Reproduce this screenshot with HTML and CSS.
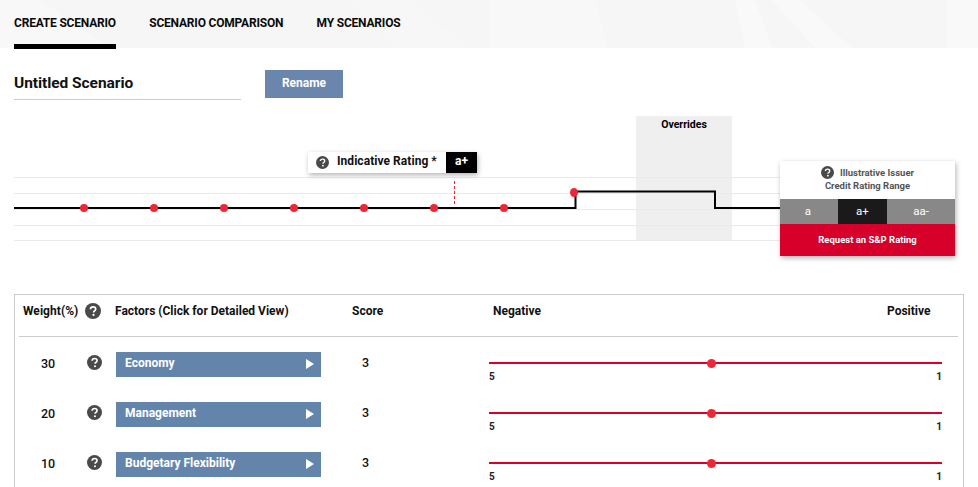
FILE: index.html
```html
<!DOCTYPE html>
<html lang="en">
<head>
<meta charset="utf-8">
<title>Create Scenario</title>
<link rel="stylesheet" href="styles.css">
</head>
<body>
<svg width="0" height="0" class="defs">
  <symbol id="q" viewBox="0 0 16 16">
    <circle cx="8" cy="8" r="8" fill="#4a4a4a"/>
    <path d="M5.400 6.200C5.500 4.600 6.600 3.800 8.100 3.800c1.500 0 2.600.9 2.600 2.200 0 1-.6 1.500-1.300 2-.6.4-.8.7-.8 1.400" fill="none" stroke="#fff" stroke-width="1.700"/>
    <circle cx="8.500" cy="11.900" r="1.100" fill="#fff"/>
  </symbol>
</svg>
<header class="top">
  <svg class="top-bg" width="978" height="48" viewBox="0 0 978 48">
    <polygon points="0,0 40,0 110,48 0,48" fill="#f8f8f8"/>
    <polygon points="345,0 410,0 470,48 395,48" fill="#f7f7f7"/>
    <polygon points="489,0 595,0 608,48 489,48" fill="#f8f8f8"/>
    <polygon points="735,0 755,0 772,48 745,48" fill="#f9f9f9"/>
    <polygon points="772,0 800,0 852,48 815,48" fill="#f9f9f9"/>
    <polygon points="947,0 978,0 978,48 947,48" fill="#f9f9f9"/>
  </svg>
  <nav class="tabs">
    <a class="tab active">CREATE SCENARIO</a>
    <a class="tab">SCENARIO COMPARISON</a>
    <a class="tab">MY SCENARIOS</a>
  </nav>
</header>
<section class="title-row">
  <h1 class="title">Untitled Scenario</h1>
  <button class="rename">Rename</button>
</section>
<section class="chart">
  <div class="overrides">Overrides</div>
  <svg class="chart-svg" width="978" height="145" viewBox="0 116 978 145">
    <g stroke="#ebebeb" stroke-width="1">
      <path d="M14 177.500H780M14 193.500H780M14 209.500H780M14 225.500H780M14 240.500H780"/>
    </g>
    <path d="M454.500 181V205" stroke="#e8263a" stroke-width="1" stroke-dasharray="3 2"/>
    <path d="M14 208H575.500V191.500H715V208H780" fill="none" stroke="#000" stroke-width="2"/>
    <g fill="#ee2737">
      <circle cx="84" cy="208" r="4"/><circle cx="154" cy="208" r="4"/><circle cx="224" cy="208" r="4"/>
      <circle cx="294" cy="208" r="4"/><circle cx="364" cy="208" r="4"/><circle cx="434" cy="208" r="4"/>
      <circle cx="504" cy="208" r="4"/><ellipse cx="574" cy="192.500" rx="4" ry="4.500"/>
    </g>
  </svg>
  <div class="indicative">
    <svg class="q-sm"><use href="#q"/></svg>
    <span class="ind-label">Indicative Rating *</span>
    <span class="ind-value">a+</span>
  </div>
  <aside class="issuer">
    <div class="issuer-head">
      <div class="issuer-line"><svg class="q-sm"><use href="#q"/></svg><span>Illustrative Issuer</span></div>
      <div>Credit Rating Range</div>
    </div>
    <div class="range">
      <span class="r-a">a</span><span class="r-b">a+</span><span class="r-c">aa-</span>
    </div>
    <div class="request">Request an S&amp;P Rating</div>
  </aside>
</section>
<section class="table">
  <div class="thead">
    <span>Weight(%)</span>
    <svg class="q-th"><use href="#q"/></svg>
    <span>Factors (Click for Detailed View)</span>
    <span class="th-score">Score</span>
    <span class="th-neg">Negative</span>
    <span class="th-pos">Positive</span>
  </div>
  <div class="row">
    <span class="weight">30</span>
    <svg class="q-row"><use href="#q"/></svg>
    <a class="factor">Economy<i class="arrow"></i></a>
    <span class="score">3</span>
    <div class="slider"><div class="track"><i class="knob"></i></div><div class="ends"><span>5</span><span>1</span></div></div>
  </div>
  <div class="row">
    <span class="weight">20</span>
    <svg class="q-row"><use href="#q"/></svg>
    <a class="factor">Management<i class="arrow"></i></a>
    <span class="score">3</span>
    <div class="slider"><div class="track"><i class="knob"></i></div><div class="ends"><span>5</span><span>1</span></div></div>
  </div>
  <div class="row">
    <span class="weight">10</span>
    <svg class="q-row"><use href="#q"/></svg>
    <a class="factor">Budgetary Flexibility<i class="arrow"></i></a>
    <span class="score">3</span>
    <div class="slider"><div class="track"><i class="knob"></i></div><div class="ends"><span>5</span><span>1</span></div></div>
  </div>
</section>
</body>
</html>
```
FILE: styles.css
```css
* { box-sizing: border-box; }
html, body { margin: 0; height: 487px; overflow: hidden; background: #fff; }
body { font-family: "Roboto", "Liberation Sans", sans-serif; color: #000; width: 978px; }
.defs { position: absolute; }

.top { position: relative; height: 48px; background: #f6f6f6; }
.top-bg { position: absolute; left: 0; top: 0; }
.tabs { position: relative; display: flex; gap: 33.300px; padding-left: 14px; }
.tab { height: 49px; padding-top: 16px; font-size: 12px; letter-spacing: -0.2px; line-height: 15px; font-weight: 700; color: #0a0a0a; white-space: nowrap; }
.tab.active { border-bottom: 5px solid #000; }

.title-row { display: flex; align-items: flex-start; padding: 22px 0 0 14px; height: 68px; }
.title { margin: 0; width: 227px; height: 30px; border-bottom: 1px solid #ccc; font-size: 15.500px; letter-spacing: -0.05px; line-height: 26px; font-weight: 700; color: #111; }
.rename { margin-left: 24px; width: 78px; height: 28px; border: 0; padding: 0 0 2px; background: #6b86ad; color: #fff; font: 700 12px "Roboto", sans-serif; }

.chart { position: relative; height: 178px; }
.chart-svg { position: absolute; left: 0; top: 0; }
.overrides { position: absolute; left: 636px; top: 0; width: 96px; height: 125px; background: #efefef; text-align: center; font-size: 10.500px; font-weight: 700; line-height: 17px; }
.indicative { position: absolute; left: 308px; top: 36px; width: 169px; height: 21px; display: flex; align-items: center; background: #fff; box-shadow: 1px 2px 5px rgba(0,0,0,.3); }
.q-sm { width: 13px; height: 13px; flex: none; }
.indicative .q-sm { margin: 0 8px 0 8px; }
.ind-label { width: 109px; font-size: 12px; letter-spacing: .05px; font-weight: 700; color: #111; white-space: nowrap; padding-bottom: 3px; }
.ind-value { width: 31px; height: 21px; background: #000; color: #fff; font-size: 12px; font-weight: 700; line-height: 19px; text-align: center; }

.issuer { position: absolute; left: 780px; top: 45px; width: 175px; height: 95px; display: flex; flex-direction: column; background: #fff; box-shadow: 1px 2px 5px rgba(0,0,0,.3); }
.issuer-head { height: 38px; padding-top: 5px; text-align: center; font-size: 9.500px; font-weight: 700; line-height: 13px; color: #555; }
.issuer-line { display: flex; justify-content: center; align-items: center; gap: 6px; }
.range { display: flex; height: 25px; background: #888; color: #fff; font-size: 11.500px; line-height: 25px; text-align: center; }
.r-a { width: 58px; padding-right: 2px; }
.r-b { width: 49px; background: #1a1a1a; }
.r-c { width: 68px; }
.request { flex: 1; background: #d6002a; color: #fff; text-align: center; font-size: 9.500px; font-weight: 700; line-height: 32px; }

.table { margin-left: 14px; width: 950px; height: 300px; border: 1px solid #ccc; padding: 0 5px 0 4px; }
.thead { position: relative; height: 42px; border-bottom: 1px solid #ccc; font-size: 12px; font-weight: 700; line-height: 15px; color: #111; }
.thead > * { position: absolute; top: 9px; }
.thead > span:nth-of-type(1) { left: 4px; letter-spacing: .05px; }
.q-th { left: 66px; width: 16px; height: 16px; top: 8px; }
.thead > span:nth-of-type(2) { left: 96px; }
.th-score { left: 333px; }
.th-neg { left: 474px; }
.th-pos { left: 868px; }

.row { display: grid; grid-template-columns: 58px 39px 205px 168px 453px; align-items: start; height: 50px; padding-top: 15px; }
.weight { text-align: center; font-size: 12.500px; font-weight: 500; line-height: 23px; color: #111; }
.q-row { width: 15px; height: 15px; margin: 3px 0 0 10px; }
.factor { position: relative; display: block; height: 25px; background: #6485ab; color: #fff; font-size: 12px; font-weight: 700; line-height: 22px; padding-left: 9px; }
.arrow { position: absolute; left: 190px; top: 7px; width: 0; height: 0; border-left: 8px solid #fff; border-top: 5.500px solid transparent; border-bottom: 5.500px solid transparent; }
.score { padding-left: 41px; font-size: 12.500px; font-weight: 500; line-height: 22px; color: #111; }
.slider { padding-top: 10px; }
.track { position: relative; height: 2px; background: #dc0028; }
.knob { position: absolute; left: 218px; top: -3.500px; width: 9px; height: 9px; border-radius: 50%; background: #ee2737; }
.ends { display: flex; justify-content: space-between; padding-top: 7px; font-size: 10px; font-weight: 700; line-height: 12px; color: #222; }
```
